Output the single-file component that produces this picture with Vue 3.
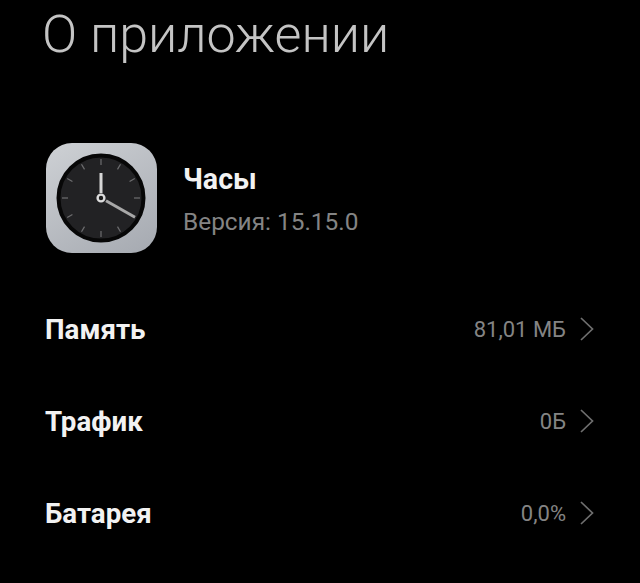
<script setup>
const rows = [
  { label: 'Память', value: '81,01 МБ' },
  { label: 'Трафик', value: '0Б' },
  { label: 'Батарея', value: '0,0%' },
]
const ticks = [30, 60, 90, 120, 150, 180, 210, 240, 270, 300, 330, 360]
</script>

<template>
  <div class="page">
    <h1 class="title">О приложении</h1>
    <div class="app">
      <svg class="icon" width="111" height="110" viewBox="0 0 111 110">
        <defs>
          <linearGradient id="bg" x1="0.2" y1="0" x2="0.8" y2="1">
            <stop offset="0" stop-color="#cbced2" />
            <stop offset="1" stop-color="#a8acb3" />
          </linearGradient>
        </defs>
        <rect x="0" y="0" width="111" height="110" rx="26" fill="url(#bg)" />
        <circle cx="55" cy="55" r="42.5" fill="#222224" stroke="#070707" stroke-width="4" />
        <g v-for="a in ticks" :key="a" :transform="`rotate(${a} 55 55)`">
          <line x1="55" y1="16" x2="55" y2="22" stroke="#6e6e70" stroke-width="1.2" />
        </g>
        <line x1="55" y1="50" x2="55" y2="30" stroke="#d6d6d6" stroke-width="3" />
        <line x1="60" y1="57.7" x2="89" y2="74.3" stroke="#a8a8a8" stroke-width="3" />
        <circle cx="55" cy="55" r="3.4" fill="#1c1c1c" stroke="#dcdcdc" stroke-width="2.4" />
      </svg>
      <div class="info">
        <div class="name">Часы</div>
        <div class="version">Версия: 15.15.0</div>
      </div>
    </div>
    <div class="list">
      <div v-for="r in rows" :key="r.label" class="row">
        <span class="label">{{ r.label }}</span>
        <span class="value">{{ r.value }}</span>
        <svg class="chev" width="14" height="24" viewBox="0 0 14 24">
          <path d="M1 1 L12.5 12 L1 23" fill="none" stroke="#6f6f6f" stroke-width="1.7" />
        </svg>
      </div>
    </div>
  </div>
</template>

<style>
html, body { margin: 0; background: #000; }
</style>

<style scoped>
.page {
  width: 640px;
  height: 583px;
  background: #000;
  overflow: hidden;
  font-family: Roboto, "Noto Sans", sans-serif;
  box-sizing: border-box;
  padding-left: 46px;
}
.title {
  margin: 0 0 0 -4px;
  padding-top: 8px;
  font-size: 52px;
  line-height: 54px;
  font-weight: 300;
  color: #c4c4c4;
}
.app {
  display: flex;
  align-items: flex-start;
  margin-top: 81px;
}
.icon { display: block; flex: none; }
.info { margin-left: 26px; padding-top: 19px; }
.name {
  font-size: 28.6px;
  line-height: 34px;
  font-weight: 700;
  color: #f2f2f2;
}
.version {
  margin-top: 11px;
  font-size: 24.4px;
  line-height: 30px;
  color: #848484;
}
.list {
  margin-top: 30px;
  padding-right: 46px;
}
.row {
  display: flex;
  align-items: center;
  height: 92px;
}
.label {
  font-size: 27.7px;
  font-weight: 700;
  color: #f2f2f2;
  margin-left: -1px;
  margin-right: auto;
}
.value {
  font-size: 22px;
  color: #848484;
}
.chev { margin-left: 14px; flex: none; }
</style>
